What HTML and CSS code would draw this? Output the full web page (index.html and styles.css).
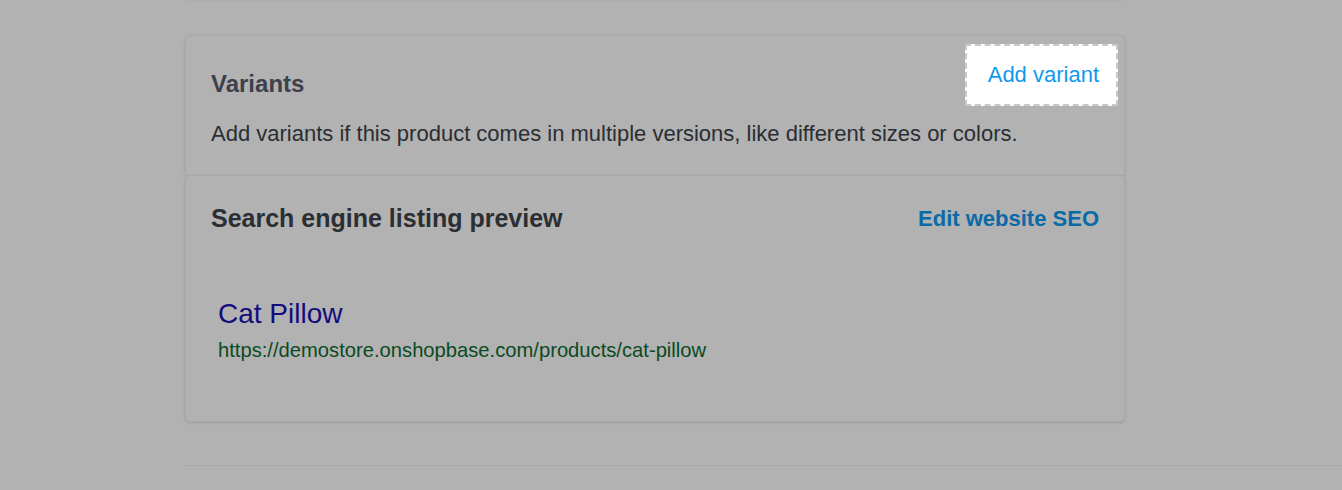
FILE: index.html
```html
<!DOCTYPE html>
<html lang="en">
<head>
<meta charset="utf-8">
<title>Product</title>
<link rel="stylesheet" href="styles.css">
</head>
<body>
<div class="page">
  <div class="top-rule"></div>
  <section class="card card-variants">
    <div class="card-header">
      <h2 class="title-variants">Variants</h2>
      <a class="btn-add">Add variant</a>
    </div>
    <p class="desc">Add variants if this product comes in multiple versions, like different sizes or colors.</p>
  </section>
  <section class="card card-seo">
    <div class="seo-header">
      <h2 class="title-seo">Search engine listing preview</h2>
      <a class="link-seo">Edit website SEO</a>
    </div>
    <div class="preview">
      <div class="preview-title">Cat Pillow</div>
      <div class="preview-url">https://demostore.onshopbase.com/products/cat-pillow</div>
    </div>
  </section>
  <div class="bottom-rule"></div>
</div>
</body>
</html>
```
FILE: styles.css
```css
html, body {
  margin: 0;
  padding: 0;
  background: #b2b2b2;
  font-family: "Liberation Sans", Arial, sans-serif;
}
.page {
  padding-left: 185px;
  height: 490px;
  box-sizing: border-box;
}
.top-rule {
  width: 940px;
  height: 1px;
  background: #adadad;
}
.card {
  width: 940px;
  box-sizing: border-box;
  background: #b2b2b2;
  border: 1px solid #a9a9a9;
  border-radius: 5px;
  box-shadow: 0 1px 3px rgba(0,0,0,0.12);
  padding: 0 25px;
}
.card-variants {
  margin-top: 34px;
  border-bottom: none;
  border-radius: 5px 5px 0 0;
  height: 140px;
}
.card-header {
  display: flex;
  justify-content: space-between;
  align-items: flex-start;
  padding-top: 8px;
}
.title-variants {
  margin: 26px 0 0;
  font-size: 24px;
  font-weight: 700;
  line-height: 28px;
  color: #3e404c;
}
.btn-add {
  display: block;
  background: #ffffff;
  border: 2px dashed #c8c8c8;
  padding: 16px 17px 16px 21px;
  margin-right: -19px;
  font-size: 22px;
  line-height: 26px;
  color: #1199ee;
}
.desc {
  margin: 15px 0 0;
  font-size: 22px;
  line-height: 25px;
  color: #2a2e33;
}
.card-seo {
  height: 247px;
}
.seo-header {
  display: flex;
  justify-content: space-between;
  align-items: center;
  padding-top: 28px;
}
.title-seo {
  margin: 0;
  font-size: 25px;
  font-weight: 700;
  line-height: 29px;
  color: #2b2f33;
}
.link-seo {
  font-size: 22px;
  font-weight: 700;
  line-height: 26px;
  color: #0a6aa8;
}
.preview {
  padding: 65px 0 0 7px;
}
.preview-title {
  font-size: 28px;
  line-height: 32px;
  color: #140b7c;
}
.preview-url {
  margin-top: 9px;
  font-size: 20.2px;
  line-height: 23px;
  color: #0a4a22;
}
.bottom-rule {
  margin-top: 43px;
  height: 1px;
  background: #a8a8a8;
}
```
